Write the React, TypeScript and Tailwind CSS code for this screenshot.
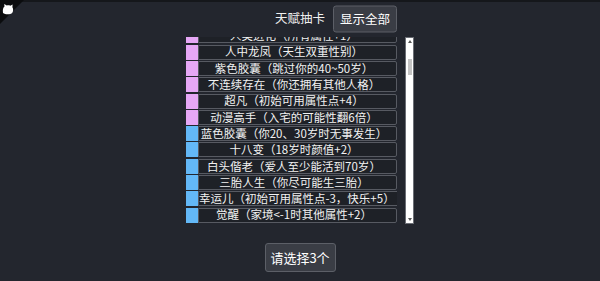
import { useLayoutEffect, useRef } from "react";

type Grade = "orange" | "purple" | "blue" | "common";

const gradeColor: Record<Grade, string> = {
  orange: "bg-[#f5a64a]",
  purple: "bg-[#e6a7f5]",
  blue: "bg-[#63b8f7]",
  common: "bg-[#e2e2e2]",
};

const talents: [string, string, Grade][] = [
  ["神秘的小盒子", "100岁时才能开启", "orange"],
  ["天选之子", "初始可用属性点+6", "orange"],
  ["祖传宝物", "家境+5", "orange"],
  ["仙人转世", "寿命大幅延长", "orange"],
  ["神童", "智力+3", "purple"],
  ["大力", "体质+3", "purple"],
  ["倾国倾城", "颜值+3", "purple"],
  ["天生乐观", "快乐+3", "purple"],
  ["人类进化", "所有属性+1", "purple"],
  ["人中龙凤", "天生双重性别", "purple"],
  ["紫色胶囊", "跳过你的40~50岁", "purple"],
  ["不连续存在", "你还拥有其他人格", "purple"],
  ["超凡", "初始可用属性点+4", "purple"],
  ["动漫高手", "入宅的可能性翻6倍", "purple"],
  ["蓝色胶囊", "你20、30岁时无事发生", "blue"],
  ["十八变", "18岁时颜值+2", "blue"],
  ["白头偕老", "爱人至少能活到70岁", "blue"],
  ["三胎人生", "你尽可能生三胎", "blue"],
  ["幸运儿", "初始可用属性点-3，快乐+5", "blue"],
  ["觉醒", "家境<-1时其他属性+2", "blue"],
  ["天赋异禀", "初始可用属性点+2", "blue"],
  ["随身玉佩", "或许有护身作用", "blue"],
  ["红肚兜", "小时候死亡率降低", "blue"],
  ["乐天派", "快乐+2", "blue"],
  ["书香门第", "智力+2", "blue"],
  ["健身达人", "体质+2", "blue"],
  ["小有姿色", "颜值+2", "blue"],
  ["富二代", "家境+2", "blue"],
  ["三十而立", "30岁时家境+2", "blue"],
  ["四十不惑", "40岁时智力+2", "blue"],
  ["五十知天命", "50岁时快乐+2", "blue"],
  ["生而为男", "性别一定为男", "common"],
  ["生而为女", "性别一定为女", "common"],
  ["独生子女", "你没有兄弟姐妹", "common"],
  ["头着地", "智力-1", "common"],
  ["早睡早起", "体质+1", "common"],
  ["乐观", "快乐+1", "common"],
  ["小聪明", "智力+1", "common"],
  ["好看", "颜值+1", "common"],
  ["小康之家", "家境+1", "common"],
  ["宅", "很少出门", "common"],
  ["近视", "颜值-1", "common"],
  ["熬夜冠军", "体质-1", "common"],
  ["路痴", "容易迷路", "common"],
  ["吃货", "更容易发胖", "common"],
  ["社恐", "不擅长交际", "common"],
  ["话痨", "更容易交到朋友", "common"],
  ["左撇子", "你惯用左手", "common"],
  ["夜猫子", "晚上精神更好", "common"],
  ["素食主义", "不吃肉", "common"],
];

const Corner = () => (
  <div className="absolute left-0 -top-[2px] z-10">
    <div className="w-0 h-0 border-t-[24px] border-r-[24px] border-t-[#0b0c0e] border-r-transparent"></div>
    <svg className="absolute left-0 top-0" width="24" height="24" viewBox="0 0 24 24">
      <path
        d="M3 13 C2.5 10 3 7.5 4.5 6.5 L4.2 4 L6.8 5.6 C8 5.2 9.2 5.3 10.3 5.8 L12.6 4.4 L12.4 7.2 C13.4 8.6 13.4 11 12.3 12.8 C10.8 14.6 5.4 15 3 13 Z"
        fill="#ffffff"
      />
    </svg>
  </div>
);

const ScrollBar = () => (
  <div className="relative w-[9px] h-[187px] border border-[#6b6e75] bg-white">
    <svg className="absolute left-[2px] top-[2px]" width="4" height="3" viewBox="0 0 4 3">
      <polygon points="2,0 4,3 0,3" fill="#555" />
    </svg>
    <div className="absolute left-[1.5px] right-[1.5px] top-[21px] h-[16px] bg-[#c4c4c4]"></div>
    <svg className="absolute left-[2px] bottom-[2px]" width="4" height="3" viewBox="0 0 4 3">
      <polygon points="0,0 4,0 2,3" fill="#555" />
    </svg>
  </div>
);

const App = () => {
  const listRef = useRef<HTMLDivElement>(null);

  useLayoutEffect(() => {
    if (listRef.current) listRef.current.scrollTop = 139;
  }, []);

  return (
    <div
      className="relative min-h-[281px] bg-[#23262e] border-t-2 border-[#15171b] text-[#f0f0f0] flex flex-col items-center"
      style={{ fontFamily: '"Noto Sans CJK SC", "Noto Sans", sans-serif' }}
    >
      <Corner />

      <div className="mt-[3px] h-[27px] flex items-center">
        <div className="relative text-[12.5px] leading-none">
          天赋抽卡
          <button className="absolute left-full top-1/2 -translate-y-1/2 ml-[8px] w-[64px] h-[27px] bg-[#3a3d45] border border-[#5c5f67] rounded-[3px] text-[12.5px] text-white">
            显示全部
          </button>
        </div>
      </div>

      <div className="mt-[5px] flex gap-[8px]">
        <div ref={listRef} className="w-[211px] h-[187px] overflow-hidden">
          <div className="flex flex-col gap-[1.3px]">
            {talents.map(([name, desc, grade]) => (
              <div key={name} className="flex h-[15px] shrink-0">
                <span className={`w-[12px] shrink-0 ${gradeColor[grade]}`}></span>
                <div className="flex-1 flex items-center justify-center pr-[7px] border border-[#575a62] bg-[#1e2127] rounded-r-[2px] text-[11.5px] leading-none text-[#f2f2f2] whitespace-nowrap">
                  {name}（{desc}）
                </div>
              </div>
            ))}
          </div>
        </div>
        <ScrollBar />
      </div>

      <button className="mt-[19px] w-[71px] h-[29px] bg-[#3a3d45] border border-[#5c5f67] rounded-[3px] text-[13px] text-white">
        请选择3个
      </button>
    </div>
  );
};

export default App;
